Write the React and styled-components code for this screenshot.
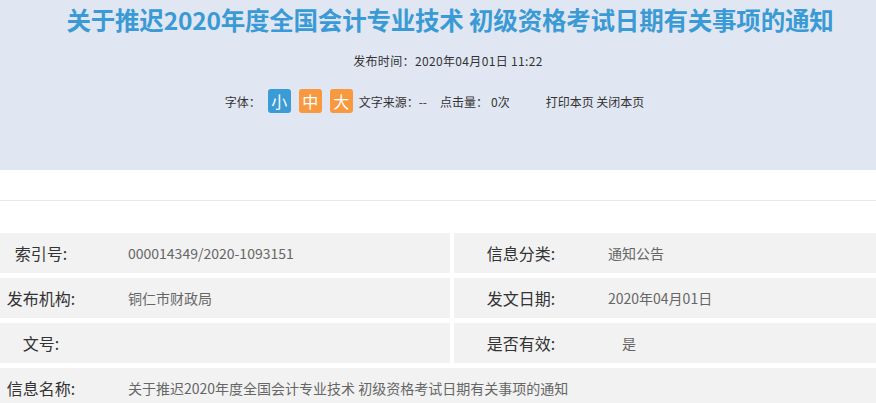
import React from 'react';
import styled, { createGlobalStyle } from 'styled-components';

const GlobalStyle = createGlobalStyle`
  html, body {
    margin: 0;
    padding: 0;
    background: #fff;
    overflow-x: hidden;
  }
  body {
    font-family: "Noto Sans CJK SC", "Noto Sans", sans-serif;
    color: #333;
  }
`;

//header area
const Header = styled.header`
  background: #e1e7f2;
  height: 170px;
  padding-top: 4px;
  box-sizing: border-box;
`;

const Title = styled.h1`
  margin: 0;
  padding-left: 24px;
  text-align: center;
  font-size: 24.5px;
  line-height: 32px;
  font-weight: 700;
  color: #3a9ad6;
  letter-spacing: -0.2px;
`;

const DateLine = styled.div`
  margin-top: 15px;
  padding-left: 20px;
  text-align: center;
  font-size: 12px;
  line-height: 20px;
  letter-spacing: 0.35px;
  color: #333;
`;

const Toolbar = styled.div`
  margin-top: 18px;
  padding-right: 7px;
  display: flex;
  justify-content: center;
  align-items: center;
  font-size: 12px;
  color: #333;
  height: 24px;
`;

const ToolText = styled.span`
  margin-left: ${(props) => props.$ml || 0}px;
  white-space: nowrap;
`;

const SizeButton = styled.span`
  width: 23px;
  height: 24px;
  border-radius: 3px;
  background: ${(props) => (props.$active ? '#3b9bd4' : '#f8983f')};
  color: #fff;
  font-size: 16px;
  line-height: 24px;
  text-align: center;
  margin-left: ${(props) => props.$ml || 0}px;
  cursor: pointer;
`;

//divider
const Divider = styled.div`
  margin-top: 30px;
  border-top: 1px solid #e8e8e8;
  height: 32px;
`;

//info table
const InfoGrid = styled.div`
  display: grid;
  grid-template-columns: 450px 1fr;
  column-gap: 4px;
  row-gap: 5px;
`;

const Cell = styled.div`
  background: #f2f2f2;
  height: 40px;
  display: flex;
  align-items: center;
  grid-column: ${(props) => (props.$wide ? '1 / span 2' : 'auto')};
`;

const Label = styled.span`
  width: ${(props) => props.$w}px;
  text-align: center;
  font-size: 16px;
  color: #333;
  flex-shrink: 0;
`;

const Value = styled.span`
  margin-left: ${(props) => props.$ml}px;
  font-size: 14px;
  color: #666;
  white-space: nowrap;
`;

const rows = [
  [
    { label: '索引号:', value: '000014349/2020-1093151' },
    { label: '信息分类:', value: '通知公告' },
  ],
  [
    { label: '发布机构:', value: '铜仁市财政局' },
    { label: '发文日期:', value: '2020年04月01日' },
  ],
  [
    { label: '文号:', value: '' },
    { label: '是否有效:', value: '\u3000是' },
  ],
];

const titleText = '关于推迟2020年度全国会计专业技术 初级资格考试日期有关事项的通知';

const App = () => {
  return (
    <>
      <GlobalStyle />
      <Header>
        <Title>{titleText}</Title>
        <DateLine>发布时间：2020年04月01日 11:22</DateLine>
        <Toolbar>
          <ToolText>字体：</ToolText>
          <SizeButton $active $ml={7}>小</SizeButton>
          <SizeButton $ml={8}>中</SizeButton>
          <SizeButton $ml={8}>大</SizeButton>
          <ToolText $ml={6}>文字来源：--</ToolText>
          <ToolText $ml={13}>点击量：</ToolText>
          <ToolText $ml={3}>0次</ToolText>
          <ToolText $ml={36}>打印本页 关闭本页</ToolText>
        </Toolbar>
      </Header>

      <Divider />

      <InfoGrid>
        {rows.map((row, i) => (
          <React.Fragment key={i}>
            <Cell>
              <Label $w={82}>{row[0].label}</Label>
              <Value $ml={46}>{row[0].value}</Value>
            </Cell>
            <Cell>
              <Label $w={134}>{row[1].label}</Label>
              <Value $ml={20}>{row[1].value}</Value>
            </Cell>
          </React.Fragment>
        ))}
        <Cell $wide>
          <Label $w={82}>信息名称:</Label>
          <Value $ml={46}>{titleText}</Value>
        </Cell>
      </InfoGrid>
    </>
  );
};

export default App;
